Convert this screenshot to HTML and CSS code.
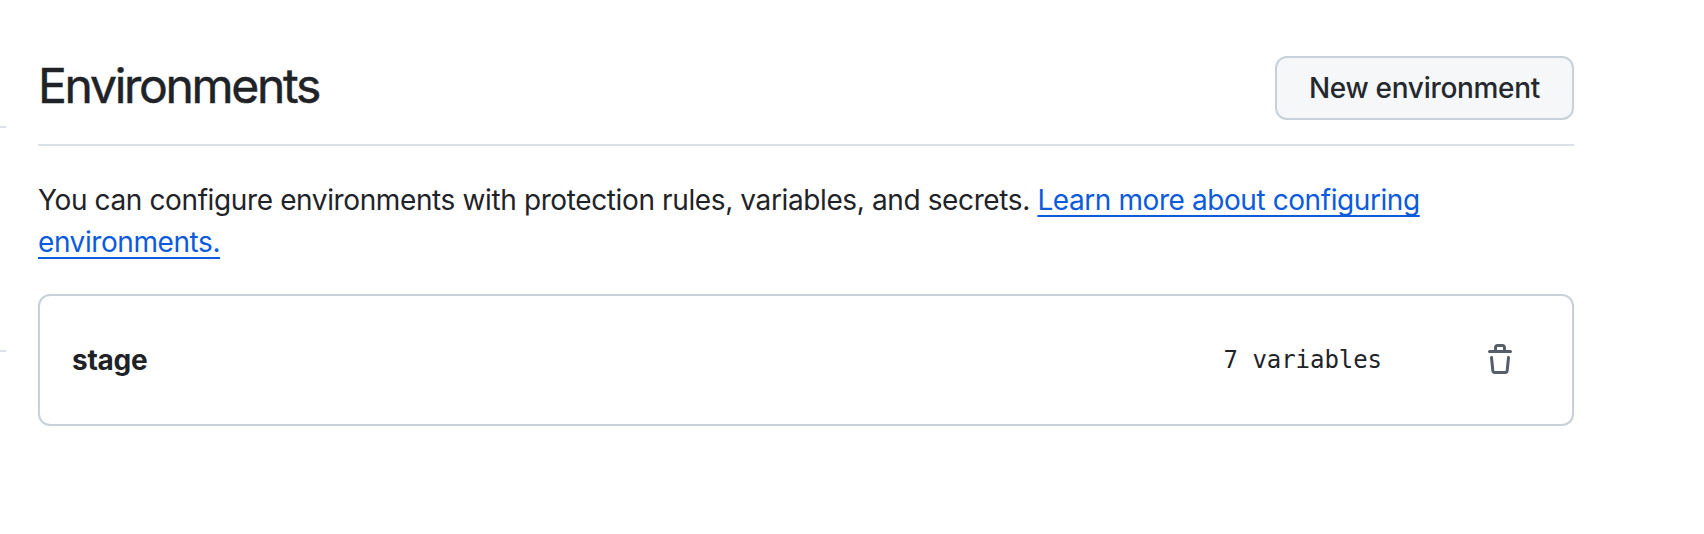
FILE: index.html
```html
<!DOCTYPE html>
<html lang="en">
<head>
<meta charset="utf-8">
<title>Environments</title>
<link rel="stylesheet" href="styles.css">
</head>
<body>
<div class="page">
  <aside class="sidebar">
    <hr class="divider">
    <hr class="divider">
  </aside>
  <main class="content">
    <header class="subhead">
      <h1 class="title">Environments</h1>
      <button class="button" type="button">New environment</button>
    </header>
    <p class="intro">You can configure environments with protection rules, variables, and secrets. <a class="link" href="#">Learn more about configuring environments.</a></p>
    <section class="card">
      <strong class="name">stage</strong>
      <code class="count">7 variables</code>
      <button class="delete" type="button" aria-label="Delete environment">
        <svg class="icon" viewBox="0 0 16 16" aria-hidden="true"><path d="M11 1.75V3h2.25a.75.75 0 0 1 0 1.5H2.75a.75.75 0 0 1 0-1.5H5V1.75C5 .784 5.784 0 6.75 0h2.5C10.216 0 11 .784 11 1.75ZM4.496 6.675l.66 6.6a.25.25 0 0 0 .249.225h5.19a.25.25 0 0 0 .249-.225l.66-6.6a.75.75 0 0 1 1.492.149l-.66 6.6A1.748 1.748 0 0 1 10.595 15h-5.19a1.75 1.75 0 0 1-1.741-1.575l-.66-6.6a.75.75 0 1 1 1.492-.15ZM6.5 1.75V3h3V1.75a.25.25 0 0 0-.25-.25h-2.5a.25.25 0 0 0-.25.25Z"/></svg>
      </button>
    </section>
  </main>
</div>
</body>
</html>
```
FILE: styles.css
```css
* { box-sizing: border-box; }
body {
  margin: 0;
  background: #fff;
  color: #1f2328;
  font-family: Inter, "Liberation Sans", sans-serif;
  font-size: 28px;
  line-height: 42px;
}
.page { display: flex; height: 534px; overflow: hidden; }
.sidebar {
  width: 6px;
  margin-right: 32px;
  padding-top: 126px;
  display: flex;
  flex-direction: column;
  gap: 222px;
}
.divider { width: 100%; height: 2px; margin: 0; border: 0; background: #dae0e5; }
.content { width: 1536px; padding-top: 56px; }
.subhead {
  display: flex;
  justify-content: space-between;
  height: 90px;
  border-bottom: 2px solid #dae0e5;
}
.title {
  margin: 0;
  font-size: 48px;
  font-weight: 400;
  line-height: 59px;
  letter-spacing: -2.28px;
  -webkit-text-stroke: 0.5px #1f2328;
}
.button {
  width: 299px;
  height: 64px;
  padding: 0;
  border: 2px solid #c8d1da;
  border-radius: 12px;
  background: #f5f7f9;
  color: #25292e;
  font: 500 28px/40px Inter, "Liberation Sans", sans-serif;
  letter-spacing: -0.3px;
  white-space: nowrap;
}
.intro { margin: 33px 0 31px; letter-spacing: -0.38px; }
.link {
  color: #0b5bdc;
  letter-spacing: -0.42px;
  text-decoration: underline;
  text-decoration-thickness: 2px;
  text-underline-offset: 5px;
  text-decoration-skip-ink: none;
}
.card {
  display: flex;
  align-items: center;
  height: 132px;
  padding: 0 56px 0 32px;
  border: 2px solid #c8d1da;
  border-radius: 12px;
}
.name { flex: 1; font-weight: 700; letter-spacing: -0.25px; }
.count { font: 24px/36px "DejaVu Sans Mono", monospace; letter-spacing: -0.05px; }
.delete {
  display: flex;
  margin-left: 102px;
  padding: 0;
  border: 0;
  background: none;
}
.icon { width: 32px; height: 32px; fill: #555e69; }
```
